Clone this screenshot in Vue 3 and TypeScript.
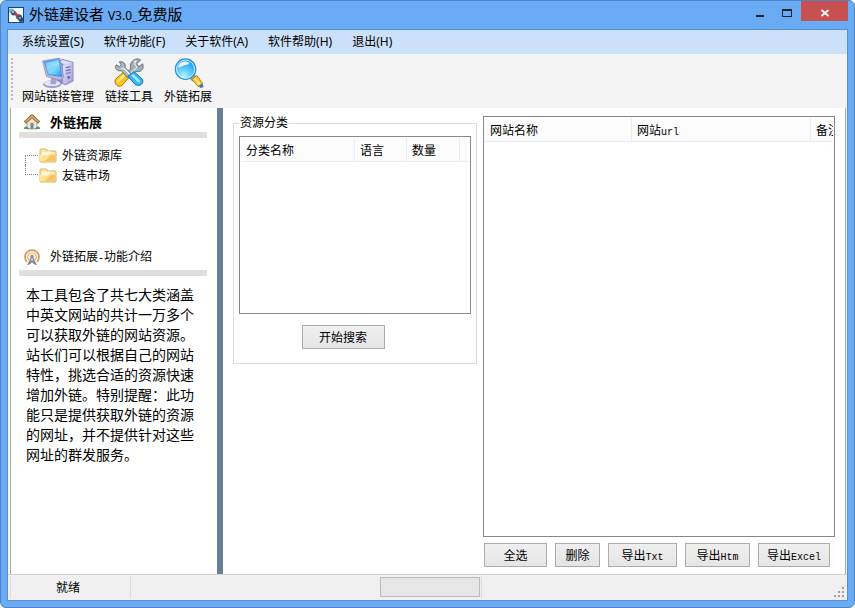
<script setup lang="ts">
import { ref } from 'vue'

interface ExportAction {
  label: string
  latin: string
  size: string
}

const menus: string[] = ['系统设置(S)', '软件功能(F)', '关于软件(A)', '软件帮助(H)', '退出(H)']
const tree: string[] = ['外链资源库', '友链市场']
const actions: ExportAction[] = [
  { label: '全选', latin: '', size: 'w-all' },
  { label: '删除', latin: '', size: 'w-del' },
  { label: '导出', latin: 'Txt', size: 'w-txt' },
  { label: '导出', latin: 'Htm', size: 'w-htm' },
  { label: '导出', latin: 'Excel', size: 'w-xls' },
]
const progress = ref<number>(0)
</script>

<template>
  <div class="window">
    <header class="titlebar">
      <svg class="app-icon" viewBox="0 0 16 16" aria-hidden="true">
        <rect width="16" height="16" fill="#1d4568" />
        <rect x="1" y="1" width="14" height="14" fill="#f2f6f9" />
        <circle cx="3.500" cy="4" r="2.500" fill="#7fa6bf" />
        <circle cx="5.500" cy="6" r="2.500" fill="#2f5f84" />
        <circle cx="5" cy="5" r="1" fill="#c8dce8" />
        <circle cx="11" cy="10" r="2.800" fill="#2f5f84" />
        <circle cx="13" cy="12.500" r="2.500" fill="#1f4b6e" />
        <circle cx="12" cy="11" r="1" fill="#8fb4cb" />
        <path d="M6.500 7l2-1.500L10.500 9l-2 1.500z" fill="#dc2929" />
      </svg>
      <h1 class="title">外链建设者 <span class="version">V3.0_</span>免费版</h1>
      <div class="controls">
        <button type="button" class="ctl" aria-label="最小化">
          <svg viewBox="0 0 12 12"><path d="M1 8h8v2H1z" fill="#222" /></svg>
        </button>
        <button type="button" class="ctl" aria-label="最大化">
          <svg viewBox="0 0 12 12"><path d="M0 2h10v8H0zM1 4v5h8V4z" fill="#222" fill-rule="evenodd" /></svg>
        </button>
        <button type="button" class="ctl close" aria-label="关闭">
          <svg viewBox="0 0 12 12"><path d="M2.500 3l7 6M9.500 3l-7 6" stroke="#fff" stroke-width="1.800" /></svg>
        </button>
      </div>
    </header>

    <div class="client">
      <nav class="menubar">
        <button v-for="m in menus" :key="m" type="button">{{ m }}</button>
      </nav>

      <div class="toolbar">
        <span class="grip"></span>
        <button type="button" class="tool">
          <svg viewBox="0 0 32 32" aria-hidden="true">
            <defs>
              <linearGradient id="scr" x1="0" y1="0" x2="1" y2="1">
                <stop offset="0" stop-color="#3aa0f2" /><stop offset=".55" stop-color="#7fdcff" /><stop offset="1" stop-color="#2b9bed" />
              </linearGradient>
              <linearGradient id="box" x1="0" y1="0" x2="1" y2="1">
                <stop offset="0" stop-color="#e6e6fb" /><stop offset="1" stop-color="#a09fd6" />
              </linearGradient>
            </defs>
            <path d="M15 3l6-2 11 3v20l-8 4-9-3z" fill="#8a88c4" />
            <path d="M16 4l5-2 10 3-7 2z" fill="#dedef6" />
            <path d="M21 7l10-2v18l-7 4-3-1z" fill="url(#box)" />
            <path d="M24 10l5-1M24 13l5-1M24 16l5-1" stroke="#6f6cb4" stroke-width="1.200" />
            <circle cx="27" cy="20" r="1.300" fill="#6461ae" />
            <ellipse cx="10" cy="27" rx="9.500" ry="4" fill="#9d9bc8" />
            <ellipse cx="10" cy="26" rx="8.500" ry="3" fill="#e6e5f6" />
            <path d="M9 19l6 2-1 6H8z" fill="#a5a3d2" />
            <path d="M0 3l18-3 4 20-4 3L4 19z" fill="#b9b7e0" stroke="#8c8abf" stroke-width=".7" />
            <path d="M2 4l15-3 3 18L6 17z" fill="url(#scr)" stroke="#1f74cc" stroke-width=".6" />
            <path d="M3 5l13-2 1 5C11 8 7 10 5 14z" fill="#b5e8ff" opacity=".5" />
          </svg>
          <span>网站链接管理</span>
        </button>
        <button type="button" class="tool">
          <svg viewBox="0 0 32 32" aria-hidden="true">
            <path d="M19 4c2-3 6-4 9-2l-4 4 2 3 4-3c2 4-1 9-6 8l-3 1-6 6-4-4 7-6c-1-3-1-5 1-7z" fill="#a3afb7" stroke="#5b6973" stroke-width=".9" />
            <path d="M21 4l2-1-1 3 2 4-9 8" fill="none" stroke="#dfe6ea" stroke-width="1.300" />
            <path d="M11 14l6 5-8 9c-4 3-9-1-7-6z" fill="#ffc31b" stroke="#bd7300" />
            <path d="M11 18l-6 6" stroke="#fff092" stroke-width="2.400" stroke-linecap="round" />
            <path d="M2 9l1-2 3 2 2-2-2-3c4-1 7 2 6 6l6 6-4 4-6-7c-3 1-6-1-6-4z" fill="#aab5bc" stroke="#596874" stroke-width=".9" />
            <path d="M8 11l3 0 6 6" stroke="#edf2f5" stroke-width="1.400" fill="none" />
            <path d="M15 19l6-5 8 7c4 4-2 10-7 6z" fill="#38b6fa" stroke="#0873ba" />
            <path d="M20 18l6 6" stroke="#a5e8ff" stroke-width="2.600" stroke-linecap="round" />
          </svg>
          <span>链接工具</span>
        </button>
        <button type="button" class="tool">
          <svg viewBox="0 0 32 32" aria-hidden="true">
            <defs>
              <radialGradient id="lens" cx=".4" cy=".85" r=".9">
                <stop offset="0" stop-color="#b4f6ff" /><stop offset=".5" stop-color="#4fc3fc" /><stop offset="1" stop-color="#168df0" />
              </radialGradient>
            </defs>
            <path d="M17 20l4-4 4 4-4 4z" fill="#a6afb9" stroke="#606c78" stroke-width=".7" />
            <path d="M20 22l5-4 6 8-4 4z" fill="#ffc22a" stroke="#b97109" stroke-width=".9" />
            <path d="M23 21l5 6" stroke="#fff19a" stroke-width="2" />
            <path d="M27 29l4-3 1 4-3 1z" fill="#4178bb" />
            <circle cx="13.500" cy="11.500" r="10.500" fill="url(#lens)" stroke="#2f8fd4" stroke-width="1.300" />
            <circle cx="13.500" cy="11.500" r="9.300" fill="none" stroke="#c9f1ff" stroke-width="1" />
            <path d="M6 10c0-6 7-8 11-5 1 2-3 2-6 3-2 1-4 2-5 2z" fill="#fff" opacity=".85" />
          </svg>
          <span>外链拓展</span>
        </button>
      </div>

      <div class="body">
        <aside class="sidebar">
          <h2 class="side-head">
            <svg viewBox="0 0 16 16" aria-hidden="true">
              <path d="M3 7l5-5 5 5v8H3z" fill="#e8e6e2" stroke="#8d8881" stroke-width=".7" />
              <path d="M6.500 9h3v6h-3z" fill="#88817a" />
              <path d="M1 8.500L8 2l7 6.500" fill="none" stroke="#8a5a25" stroke-width="3.200" stroke-linejoin="round" />
              <path d="M1.500 8L8 2l6.500 6" fill="none" stroke="#d9a25a" stroke-width="1.900" stroke-linejoin="round" />
              <path d="M0 15c0-3 3-3 4-1l2 1zM16 15c0-3-3-3-4-1l-2 1z" fill="#43a34e" />
            </svg>
            <span>外链拓展</span>
          </h2>
          <ul class="tree">
            <li v-for="t in tree" :key="t">
              <span class="branch"></span>
              <svg viewBox="0 0 18 15" aria-hidden="true">
                <path d="M1 2q0-1 1-1h5l2 2h7q1 0 1 1v9q0 1-1 1H2q-1 0-1-1z" fill="#fbe5a0" stroke="#d5b56a" />
                <path d="M3 4h5l1-1 6 2v8H3z" fill="#fff8df" />
                <path d="M2 7h7l2-2h5v8H2z" fill="#ffe08a" />
                <path d="M9 10l3-3h4v6H6z" fill="#ffc265" />
                <path d="M2 13V7h7l2-2h5" fill="none" stroke="#fff6cc" />
              </svg>
              <a href="#">{{ t }}</a>
            </li>
          </ul>
          <h2 class="side-head plain">
            <svg viewBox="0 0 16 16" aria-hidden="true">
              <path d="M3 13A7 7 0 1 1 13 13" fill="none" stroke="#dd9a4c" stroke-width="1.700" />
              <path d="M5 11A4.200 4.200 0 1 1 11 11" fill="none" stroke="#e5ae6d" stroke-width="1.400" />
              <path d="M8 7L4 16M8 7l4 9M6 11l5 4M10 11l-5 4" fill="none" stroke="#7c8085" stroke-width="1.300" />
              <circle cx="8" cy="7.500" r="1.700" fill="#8b8f94" />
            </svg>
            <span>外链拓展<span class="latin">-</span>功能介绍</span>
          </h2>
          <p class="intro">本工具包含了共七大类涵盖中英文网站的共计一万多个可以获取外链的网站资源。站长们可以根据自己的网站特性，挑选合适的资源快速增加外链。特别提醒：此功能只是提供获取外链的资源的网址，并不提供针对这些网址的群发服务。</p>
        </aside>

        <main class="main">
          <fieldset class="group">
            <legend>资源分类</legend>
            <div class="list category">
              <table>
                <thead>
                  <tr><th class="c-name">分类名称</th><th class="c-lang">语言</th><th class="c-count">数量</th><th></th></tr>
                </thead>
              </table>
            </div>
            <button type="button" class="btn search">开始搜索</button>
          </fieldset>

          <section class="results">
            <div class="list sites">
              <table>
                <thead>
                  <tr>
                    <th class="s-name">网站名称</th>
                    <th class="s-url">网站<span class="latin">url</span></th>
                    <th class="s-note">备注</th>
                  </tr>
                </thead>
              </table>
            </div>
            <div class="actions">
              <button v-for="a in actions" :key="a.label + a.latin" type="button" class="btn" :class="a.size">{{ a.label }}<span v-if="a.latin" class="latin">{{ a.latin }}</span></button>
            </div>
          </section>
        </main>
      </div>

      <footer class="status">
        <span class="state">就绪</span>
        <span class="pane"><progress :value="progress" max="100" aria-label="进度"></progress></span>
        <svg class="resize" viewBox="0 0 11 11" aria-hidden="true">
          <path d="M9 0h2v2H9zM5 4h2v2H5zM9 4h2v2H9zM1 8h2v2H1zM5 8h2v2H5zM9 8h2v2H9z" fill="#a3a3a3" />
        </svg>
      </footer>
    </div>
  </div>
</template>

<style>
body {
  background: #fff;
}
</style>

<style scoped>
* {
  box-sizing: border-box;
}
.window {
  display: flex;
  flex-direction: column;
  height: 100vh;
  padding: 0 6px 6px;
  border: 1px solid #4d84c1;
  border-radius: 6px;
  background: #6aabf5;
  color: #000;
  font: 12px/16px "Noto Sans", "Noto Sans CJK SC", sans-serif;
  overflow: hidden;
}
button {
  font: inherit;
  color: inherit;
  border: 0;
  padding: 0;
  background: none;
  white-space: nowrap;
}
.titlebar {
  display: flex;
  flex: none;
  height: 28px;
  padding-left: 1px;
}
.app-icon {
  width: 16px;
  height: 16px;
  margin-top: 6px;
}
.title {
  flex: 1;
  margin: 0 0 0 5px;
  font-size: 15px;
  font-weight: 400;
  line-height: 27px;
}
.version {
  font-size: 12px;
}
.controls {
  display: flex;
  height: 20px;
}
.ctl {
  width: 27px;
  height: 20px;
}
.ctl svg {
  display: block;
  width: 12px;
  height: 12px;
  margin: 4px auto 0;
}
.close {
  width: 47px;
  background: #c75050;
}
.client {
  display: flex;
  flex: 1;
  flex-direction: column;
  min-height: 0;
  border: 1px solid #5b90cc;
  background: #f4f4f4;
}
.menubar {
  display: flex;
  flex: none;
  gap: 20px;
  height: 24px;
  padding-left: 14px;
  background: #cae1f9;
}
.toolbar {
  display: flex;
  flex: none;
  gap: 11px;
  height: 54px;
  padding: 4px 0 0 3px;
}
.grip {
  width: 2px;
  height: 44px;
  margin-right: -2px;
  background: repeating-linear-gradient(#bdbdbd 0 2px, transparent 2px 4px);
}
.tool {
  display: flex;
  flex-direction: column;
  align-items: center;
  height: 48px;
}
.tool svg {
  width: 32px;
  height: 31px;
}
.body {
  display: flex;
  flex: 1;
  min-height: 0;
  margin: 0 1px 0 2px;
  border: solid #a8a8a8;
  border-width: 0 1px;
  background: #fff;
}
.sidebar {
  flex: none;
  width: 212px;
  padding: 0 10px 0 8px;
  border-right: 6px solid #697e97;
}
.side-head {
  display: flex;
  align-items: center;
  gap: 10px;
  height: 30px;
  margin: 0;
  padding: 4px 0 0 5px;
  border-bottom: 6px solid #dfdfdf;
  font-size: 13px;
  font-weight: 700;
}
.side-head svg {
  width: 16px;
  height: 16px;
}
.plain {
  height: 36px;
  font-size: 12px;
  font-weight: 400;
}
.tree {
  height: 102px;
  margin: 0;
  padding: 7px 0 0 6px;
  list-style: none;
}
.tree li {
  display: flex;
  align-items: center;
  height: 20px;
}
.tree svg {
  width: 18px;
  height: 15px;
  margin-left: 1px;
}
.tree a {
  margin-left: 5px;
  padding-top: 2px;
  color: inherit;
  text-decoration: none;
}
.branch {
  align-self: flex-end;
  width: 13px;
  height: 10px;
  border: dotted #808080;
  border-width: 1px 0 0 1px;
}
li:last-child .branch {
  align-self: flex-start;
  border-width: 0 0 1px 1px;
}
.intro {
  margin: 8px 4px 0 7px;
  font-family: "Noto Sans CJK SC", sans-serif;
  font-size: 14px;
  line-height: 20px;
}
.main {
  display: flex;
  flex: 1;
  gap: 6px;
  min-width: 0;
  padding: 8px 10px 7px;
}
.group {
  display: flex;
  flex: none;
  flex-direction: column;
  align-items: center;
  width: 244px;
  height: 248px;
  margin: 0;
  padding: 6px 5px 0;
  border: 1px solid #dcdcdc;
}
.group legend {
  padding: 0 1px;
  line-height: 14px;
}
.list {
  border: 1px solid #828790;
  padding: 1px;
  overflow: hidden;
}
.list table {
  width: 100%;
  border-collapse: separate;
  border-spacing: 0;
  table-layout: fixed;
}
.list th {
  height: 24px;
  padding: 2px 0 0 5px;
  border: solid #e4eefb;
  border-width: 0 1px 1px 0;
  background: #fcfcfc;
  font-weight: 400;
  text-align: left;
  white-space: nowrap;
}
.list th:last-child {
  border-right: 0;
}
.category {
  width: 232px;
  height: 178px;
}
.c-name {
  width: 114px;
}
.c-lang {
  width: 52px;
}
.c-count {
  width: 53px;
}
.search {
  width: 83px;
  margin: 11px 24px 0 0;
}
.results {
  display: flex;
  flex: 1;
  flex-direction: column;
  min-width: 0;
}
.sites {
  flex: 1;
}
.s-name {
  width: 147px;
}
.s-url {
  width: 179px;
}
.s-note {
  overflow: hidden;
}
.actions {
  display: flex;
  gap: 8px;
  margin-top: 6px;
  padding-left: 1px;
}
.btn {
  height: 24px;
  padding-top: 1px;
  border: 1px solid #acacac;
  background: linear-gradient(#f0f0f0, #e5e5e5);
}
.latin {
  font-family: "Liberation Mono", monospace;
  font-size: 10px;
  line-height: 10px;
}
.w-all {
  width: 63px;
}
.w-del {
  width: 45px;
}
.w-txt {
  width: 69px;
}
.w-htm {
  width: 65px;
}
.w-xls {
  width: 72px;
}
.status {
  display: flex;
  flex: none;
  height: 26px;
  padding: 2px 3px 2px 2px;
  border-top: 1px solid #d2d2d2;
  background: #f0f0f0;
}
.state {
  width: 121px;
  padding-left: 45px;
  border: solid #dcdcdc;
  border-width: 0 1px;
  line-height: 21px;
}
.pane {
  display: flex;
  justify-content: flex-end;
  width: 351px;
  padding-right: 1px;
  border-right: 1px solid #dcdcdc;
}
progress {
  width: 100px;
  height: 20px;
  border: 1px solid #bcbcbc;
  background: #e6e6e6;
  appearance: none;
}
progress::-webkit-progress-bar {
  background: #e6e6e6;
}
.resize {
  align-self: flex-end;
  width: 11px;
  height: 11px;
  margin-left: auto;
}
</style>
